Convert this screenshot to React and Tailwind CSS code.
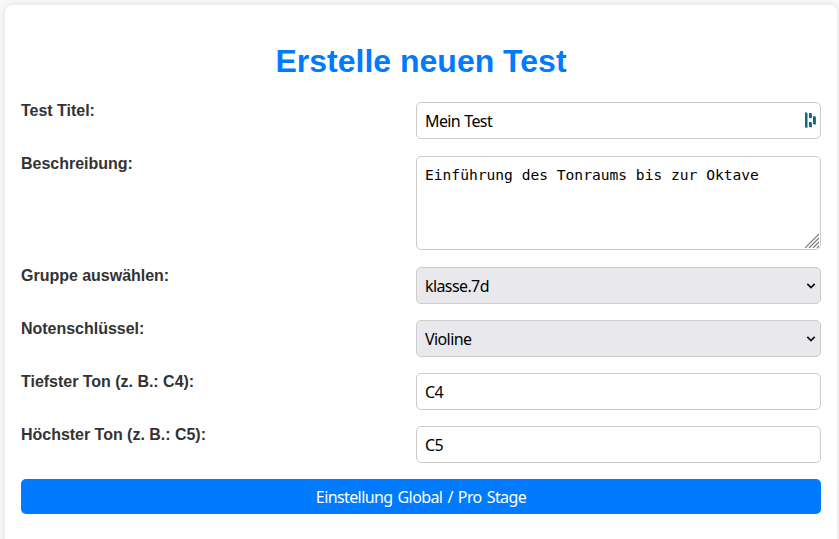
const sans = 'font-["Noto_Sans",sans-serif] text-[16px] tracking-[-0.6px] [word-spacing:0.5px] text-black';
const box = 'block w-full h-[37px] rounded-[5px] border border-[#ccc] px-2 leading-5 outline-none';

function Row({ label, className = 'mb-4', labelClass = 'leading-[18px]', children }) {
  return (
    <div className={`flex ${className}`}>
      <label className={`w-[395px] shrink-0 font-bold text-[16px] tracking-[-0.02px] text-[#333] ${labelClass}`}>{label}</label>
      <div className="relative min-w-0 flex-1">{children}</div>
    </div>
  );
}

function Select({ value }) {
  return (
    <>
      <select defaultValue={value} className={`${box} ${sans} appearance-none bg-[#e9e9ed]`}>
        <option>{value}</option>
      </select>
      <svg className="pointer-events-none absolute right-[5px] top-[15px]" width="10" height="8" viewBox="0 0 10 8" fill="none">
        <path d="M1.3 1.8 5 5.5 8.7 1.8" stroke="#111" strokeWidth="1.7" />
      </svg>
    </>
  );
}

export default function App() {
  return (
    <div className='h-[539px] overflow-hidden bg-[#f9f9f9] pl-[5px] pr-[2px] pt-[5px] font-["Liberation_Sans",Arial,sans-serif]'>
      <div className="h-[600px] rounded-[8px] bg-white px-4 pt-[37px] shadow-[0_0_10px_rgba(0,0,0,0.1)]">
        <h1 className="mb-[22px] text-center text-[32px] font-bold leading-[38px] text-[#007bff]">Erstelle neuen Test</h1>
        <Row label="Test Titel:" className="mb-[17px]">
          <input className={`${box} ${sans} bg-white`} defaultValue="Mein Test" />
          <svg className="absolute right-[5px] top-[10px]" width="11" height="16" viewBox="0 0 11 16" fill="#0e6b7c">
            <path d="M0 .5h1.8l.7.8v14.4H.8L0 15zM4 1h2l.9.8v4.4H4.9L4 5.4zM4 10h2l.9.8v4.4H4.9L4 14.4zM8 4.3h2l.9.8v7.3H8.9L8 11.6z" />
          </svg>
        </Row>
        <Row label="Beschreibung:" className="mb-[17px]" labelClass="leading-4">
          <textarea
            className='block h-[94px] w-full resize-none rounded-[5px] border border-[#ccc] bg-white px-2 py-2 font-["DejaVu_Sans_Mono",monospace] text-[14.6px] leading-[19px] text-black outline-none'
            defaultValue="Einführung des Tonraums bis zur Oktave"
          />
          <svg className="absolute bottom-[2px] right-[2px]" width="14" height="14" viewBox="0 0 14 14" stroke="#777" strokeWidth="1.2">
            <path d="M0 14 14 0M4 14 14 4M8 14l6-6M12 14l2-2" />
          </svg>
        </Row>
        <Row label="Gruppe auswählen:"><Select value="klasse.7d" /></Row>
        <Row label="Notenschlüssel:"><Select value="Violine" /></Row>
        <Row label="Tiefster Ton (z. B.: C4):">
          <input className={`${box} ${sans} bg-white`} defaultValue="C4" />
        </Row>
        <Row label="Höchster Ton (z. B.: C5):">
          <input className={`${box} ${sans} bg-white`} defaultValue="C5" />
        </Row>
        <button className='block h-[35px] w-full rounded-[5px] bg-[#007bff] font-["Noto_Sans",sans-serif] text-[16px] leading-5 tracking-[-0.6px] text-white [word-spacing:1.5px]'>
          Einstellung Global / Pro Stage
        </button>
      </div>
    </div>
  );
}
